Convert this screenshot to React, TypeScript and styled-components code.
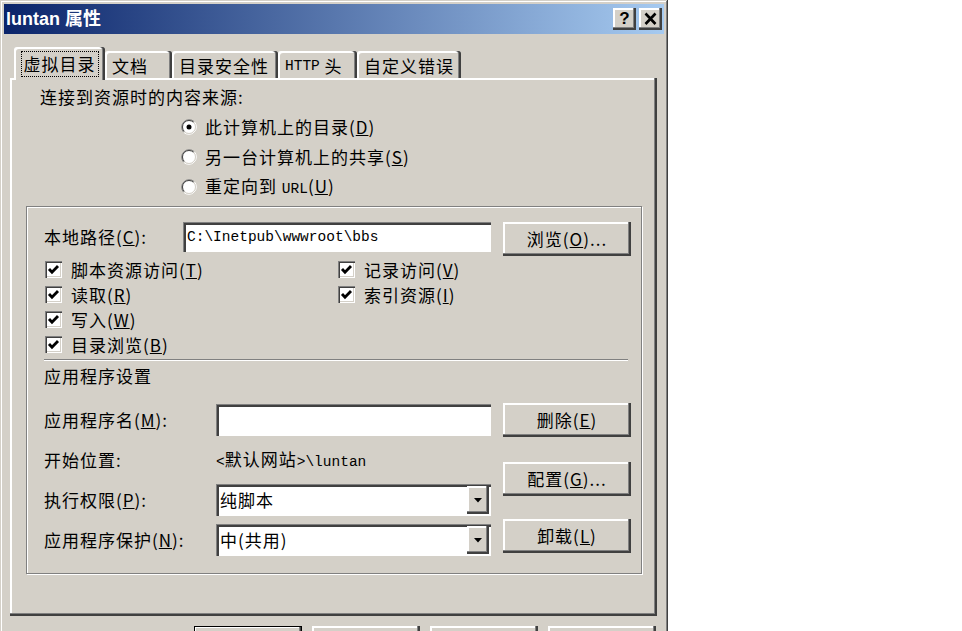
import React from "react";
import styled, { createGlobalStyle } from "styled-components";

const FACE = "#d4d0c8";
const UI_FONT = `"Noto Sans CJK SC", "Liberation Sans", sans-serif`;

const raised = `inset -2px -2px #404040, inset -3px -3px #808080, inset 2px 2px #ffffff`;
const sunken = `inset 1px 1px #808080, inset 3px 3px #404040, inset -2px -2px #ffffff`;

const GlobalStyle = createGlobalStyle`
  html, body {
    margin: 0;
    padding: 0;
    background: #ffffff;
    overflow: hidden;
  }
  #root {
    width: 962px;
    height: 631px;
    overflow: hidden;
  }
`;

const Window = styled.div`
  box-sizing: border-box;
  width: 668px;
  height: 690px;
  padding: 4px;
  background: ${FACE};
  box-shadow: inset -1px -1px #404040, inset 1px 1px ${FACE}, inset -2px -2px #808080,
    inset 2px 2px #ffffff;
  font-family: ${UI_FONT};
  font-size: 17px;
  letter-spacing: 1px;
  line-height: 20px;
  color: #000;
`;

const TitleBar = styled.div`
  display: flex;
  align-items: center;
  justify-content: space-between;
  height: 30px;
  padding: 0 2px;
  background: linear-gradient(to right, #0a246a, #a6caf0);
`;

const TitleText = styled.span`
  font-family: "Liberation Sans", "Noto Sans CJK SC", sans-serif;
  font-weight: bold;
  font-size: 18px;
  letter-spacing: 0;
  color: #ffffff;
`;

const CaptionButtons = styled.div`
  display: flex;
  gap: 3px;
`;

const CaptionButton = styled.div`
  box-sizing: border-box;
  width: 23px;
  height: 22px;
  display: flex;
  align-items: center;
  justify-content: center;
  background: ${FACE};
  box-shadow: ${raised};
  font-family: "Liberation Sans", sans-serif;
  font-weight: bold;
  font-size: 17px;
  letter-spacing: 0;
`;

const Body = styled.div`
  padding: 13px 7px 0 6px;
`;

const TabStrip = styled.div`
  display: flex;
  align-items: flex-end;
  height: 31px;
  padding-left: 4px;
`;

const Tab = styled.div<{ $w: number; $active?: boolean }>`
  box-sizing: border-box;
  position: relative;
  z-index: ${(p) => (p.$active ? 1 : 0)};
  width: ${(p) => p.$w}px;
  height: ${(p) => (p.$active ? 33 : 27)}px;
  margin-bottom: ${(p) => (p.$active ? -2 : 0)}px;
  display: flex;
  align-items: center;
  justify-content: ${(p) => (p.$active ? "center" : "flex-start")};
  padding: ${(p) => (p.$active ? "4px 0 3px" : "2px 0 0 7px")};
  background: ${FACE};
  border-radius: 3px 3px 0 0;
  box-shadow: inset -2px 0 #404040, inset -3px 0 #808080, inset 2px 2px #ffffff;
  white-space: nowrap;
`;

const FocusRing = styled.span`
  box-sizing: border-box;
  display: inline-flex;
  align-items: center;
  height: 26px;
  padding: 0 2px;
  border: 1px dotted #000;
`;

const Panel = styled.div`
  box-sizing: border-box;
  width: 647px;
  padding: 9px 15px 42px 16px;
  background: ${FACE};
  box-shadow: inset -2px -2px #404040, inset -3px -3px #808080, inset 2px 2px #ffffff;
`;

const Heading = styled.div`
  margin-left: 14px;
`;

const RadioList = styled.div`
  display: flex;
  flex-direction: column;
  margin: 5px 0 0 155px;
`;

const OptionRow = styled.label`
  display: flex;
  align-items: center;
  gap: 8px;
  height: 30px;
`;

const GroupBox = styled.div`
  box-sizing: border-box;
  width: 616px;
  margin-top: 4px;
  padding: 15px 10px 17px 17px;
  border: 1px solid #808080;
  box-shadow: inset 1px 1px #ffffff, 1px 1px #ffffff;
`;

const PathRow = styled.div`
  display: flex;
  align-items: flex-start;
  height: 32px;
`;

const FieldLabel = styled.span<{ $w?: number }>`
  width: ${(p) => (p.$w ? `${p.$w}px` : "auto")};
  line-height: 30px;
  white-space: nowrap;
`;

const TextField = styled.div<{ $w: number }>`
  box-sizing: border-box;
  width: ${(p) => p.$w}px;
  height: ${(p) => (p.$w > 300 ? 30 : 32)}px;
  display: flex;
  align-items: center;
  padding-left: 4px;
  background: #ffffff;
  box-shadow: ${sunken};
  font-family: "Liberation Mono", monospace;
  font-size: 14.5px;
  letter-spacing: 0;
`;

const Combo = styled.div`
  box-sizing: border-box;
  width: 275px;
  height: 32px;
  display: flex;
  align-items: stretch;
  padding: 2px 2px 2px 0;
  background: #ffffff;
  box-shadow: ${sunken};
`;

const ComboText = styled.span`
  flex: 1;
  display: flex;
  align-items: center;
  padding-left: 4px;
`;

const ComboArrow = styled.span`
  box-sizing: border-box;
  width: 22px;
  display: flex;
  align-items: center;
  justify-content: center;
  background: ${FACE};
  box-shadow: ${raised};
`;

const Button = styled.div<{ $w?: number; $top?: number; $default?: boolean }>`
  box-sizing: border-box;
  width: ${(p) => p.$w ?? 128}px;
  height: 34px;
  margin-top: ${(p) => p.$top ?? 0}px;
  display: flex;
  align-items: center;
  justify-content: center;
  flex-shrink: 0;
  background: ${FACE};
  box-shadow: ${(p) => (p.$default ? `inset 0 0 0 1px #000, ${raised}` : raised)};
  white-space: nowrap;
`;

const PathButton = styled(Button)`
  margin-left: 12px;
`;

const CheckColumns = styled.div`
  display: flex;
  margin-top: 3px;
`;

const CheckColumn = styled.div<{ $w?: number }>`
  display: flex;
  flex-direction: column;
  width: ${(p) => (p.$w ? `${p.$w}px` : "auto")};
`;

const CheckRow = styled.label`
  display: flex;
  align-items: center;
  gap: 9px;
  height: 25px;
  padding-left: 1px;
`;

const CheckBox = styled.span`
  box-sizing: border-box;
  width: 17px;
  height: 17px;
  display: flex;
  align-items: center;
  justify-content: center;
  background: #ffffff;
  box-shadow: inset 1px 1px #808080, inset 2px 2px #404040, inset -1px -1px #ffffff,
    inset -2px -2px ${FACE};
`;

const Separator = styled.div`
  height: 1px;
  margin: 2px 3px 0 0;
  background: #808080;
  border-bottom: 1px solid #ffffff;
`;

const SectionTitle = styled.div`
  margin-top: 5px;
`;

const AppSection = styled.div`
  display: flex;
  gap: 12px;
  margin-top: 17px;
`;

const AppGrid = styled.div`
  display: grid;
  grid-template-columns: 172px 275px;
  grid-auto-rows: 32px;
  row-gap: 8px;
  align-items: center;
  padding-top: 1px;
`;

const ButtonColumn = styled.div`
  display: flex;
  flex-direction: column;
`;

const ValueText = styled.span`
  white-space: nowrap;
`;

const Mono = styled.span`
  font-family: "Liberation Mono", monospace;
  font-size: 14.5px;
  letter-spacing: 0;
`;

const DialogButtons = styled.div`
  display: flex;
  justify-content: flex-end;
  gap: 10px;
  margin-top: 10px;
  padding-right: 1px;
`;

function Radio({ checked }: { checked?: boolean }) {
  return (
    <svg width="16" height="16" viewBox="0 0 16 16">
      <circle cx="8" cy="8" r="6.5" fill="#ffffff" />
      <path d="M2.7 13.3 A7.5 7.5 0 0 1 13.3 2.7" stroke="#808080" fill="none" />
      <path d="M13.3 2.7 A7.5 7.5 0 0 1 2.7 13.3" stroke="#ffffff" fill="none" />
      <path d="M3.4 12.6 A6.5 6.5 0 0 1 12.6 3.4" stroke="#404040" fill="none" />
      <path d="M12.6 3.4 A6.5 6.5 0 0 1 3.4 12.6" stroke={FACE} fill="none" />
      {checked && <circle cx="8" cy="8" r="2.5" fill="#000" />}
    </svg>
  );
}

function Check({ label, hot }: { label: string; hot: string }) {
  return (
    <CheckRow>
      <CheckBox>
        <svg width="17" height="17" viewBox="0 0 17 17">
          <path d="M4 8 L7 11.3 L13 5" stroke="#000" strokeWidth="2.8" fill="none" />
        </svg>
      </CheckBox>
      <span>
        {label}(<u>{hot}</u>)
      </span>
    </CheckRow>
  );
}

function Arrow() {
  return (
    <ComboArrow>
      <svg width="8" height="5" viewBox="0 0 8 5">
        <polygon points="0,0 8,0 4,4.5" fill="#000" />
      </svg>
    </ComboArrow>
  );
}

export default function App() {
  return (
    <>
      <GlobalStyle />
      <Window>
        <TitleBar>
          <TitleText>luntan 属性</TitleText>
          <CaptionButtons>
            <CaptionButton>?</CaptionButton>
            <CaptionButton>
              <svg width="23" height="22" viewBox="0 0 23 22">
                <path d="M6.5 5.5 L16.5 16 M16.5 5.5 L6.5 16" stroke="#000" strokeWidth="2.6" />
              </svg>
            </CaptionButton>
          </CaptionButtons>
        </TitleBar>

        <Body>
          <TabStrip>
            <Tab $w={91} $active>
              <FocusRing>虚拟目录</FocusRing>
            </Tab>
            <Tab $w={67}>文档</Tab>
            <Tab $w={106}>目录安全性</Tab>
            <Tab $w={79}>
              <Mono>HTTP</Mono>&nbsp;头
            </Tab>
            <Tab $w={104}>自定义错误</Tab>
          </TabStrip>

          <Panel>
            <Heading>连接到资源时的内容来源:</Heading>
            <RadioList>
              <OptionRow>
                <Radio checked />
                <span>
                  此计算机上的目录(<u>D</u>)
                </span>
              </OptionRow>
              <OptionRow>
                <Radio />
                <span>
                  另一台计算机上的共享(<u>S</u>)
                </span>
              </OptionRow>
              <OptionRow>
                <Radio />
                <span>
                  重定向到 <Mono>URL</Mono>(<u>U</u>)
                </span>
              </OptionRow>
            </RadioList>

            <GroupBox>
              <PathRow>
                <FieldLabel $w={139}>
                  本地路径(<u>C</u>):
                </FieldLabel>
                <TextField $w={308}>{"C:\\Inetpub\\wwwroot\\bbs"}</TextField>
                <PathButton>
                  浏览(<u>O</u>)...
                </PathButton>
              </PathRow>

              <CheckColumns>
                <CheckColumn $w={293}>
                  <Check label="脚本资源访问" hot="T" />
                  <Check label="读取" hot="R" />
                  <Check label="写入" hot="W" />
                  <Check label="目录浏览" hot="B" />
                </CheckColumn>
                <CheckColumn>
                  <Check label="记录访问" hot="V" />
                  <Check label="索引资源" hot="I" />
                </CheckColumn>
              </CheckColumns>

              <Separator />
              <SectionTitle>应用程序设置</SectionTitle>

              <AppSection>
                <AppGrid>
                  <FieldLabel>
                    应用程序名(<u>M</u>):
                  </FieldLabel>
                  <TextField $w={275} />
                  <FieldLabel>开始位置:</FieldLabel>
                  <ValueText>
                    <Mono>{"<"}</Mono>默认网站<Mono>{">\\luntan"}</Mono>
                  </ValueText>
                  <FieldLabel>
                    执行权限(<u>P</u>):
                  </FieldLabel>
                  <Combo>
                    <ComboText>纯脚本</ComboText>
                    <Arrow />
                  </Combo>
                  <FieldLabel>
                    应用程序保护(<u>N</u>):
                  </FieldLabel>
                  <Combo>
                    <ComboText>中(共用)</ComboText>
                    <Arrow />
                  </Combo>
                </AppGrid>
                <ButtonColumn>
                  <Button>
                    删除(<u>E</u>)
                  </Button>
                  <Button $top={25}>
                    配置(<u>G</u>)...
                  </Button>
                  <Button $top={23}>
                    卸载(<u>L</u>)
                  </Button>
                </ButtonColumn>
              </AppSection>
            </GroupBox>
          </Panel>

          <DialogButtons>
            <Button $w={108} $default />
            <Button $w={108} />
            <Button $w={108} />
            <Button $w={108} />
          </DialogButtons>
        </Body>
      </Window>
    </>
  );
}
